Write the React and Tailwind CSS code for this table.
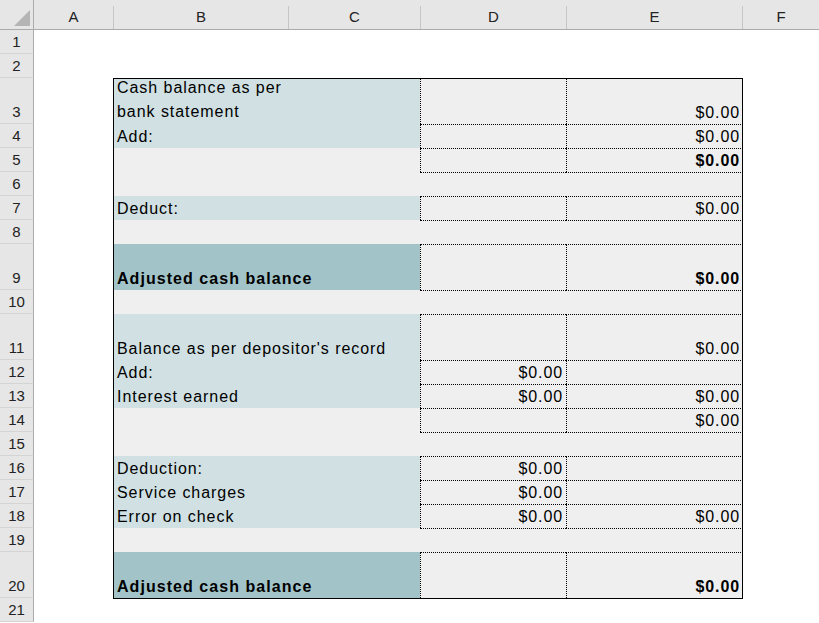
import React from "react";

const LB = "bg-[#d0e0e3]";
const TL = "bg-[#a2c4c9]";
const GR = "bg-[#efefef]";

const rows = [
  { n: 1, h: 24 },
  { n: 2, h: 24 },
  { n: 3, h: 46, t: true, bc: LB, label: ["Cash balance as per", "bank statement"], side: true, e: "$0.00" },
  { n: 4, h: 24, t: true, bc: LB, label: ["Add:"], side: true, e: "$0.00" },
  { n: 5, h: 24, t: true, bc: GR, side: true, e: "$0.00", eb: true },
  { n: 6, h: 24, t: true, bc: GR },
  { n: 7, h: 24, t: true, bc: LB, label: ["Deduct:"], side: true, e: "$0.00" },
  { n: 8, h: 24, t: true, bc: GR },
  { n: 9, h: 46, t: true, bc: TL, label: ["Adjusted cash balance"], bold: true, side: true, e: "$0.00", eb: true },
  { n: 10, h: 24, t: true, bc: GR },
  { n: 11, h: 46, t: true, bc: LB, label: ["Balance as per depositor's record"], side: true, e: "$0.00" },
  { n: 12, h: 24, t: true, bc: LB, label: ["Add:"], side: true, d: "$0.00" },
  { n: 13, h: 24, t: true, bc: LB, label: ["Interest earned"], side: true, d: "$0.00", e: "$0.00" },
  { n: 14, h: 24, t: true, bc: GR, side: true, e: "$0.00" },
  { n: 15, h: 24, t: true, bc: GR },
  { n: 16, h: 24, t: true, bc: LB, label: ["Deduction:"], side: true, d: "$0.00" },
  { n: 17, h: 24, t: true, bc: LB, label: ["Service charges"], side: true, d: "$0.00" },
  { n: 18, h: 24, t: true, bc: LB, label: ["Error on check"], side: true, d: "$0.00", e: "$0.00" },
  { n: 19, h: 24, t: true, bc: GR },
  { n: 20, h: 46, t: true, bc: TL, label: ["Adjusted cash balance"], bold: true, side: true, e: "$0.00", eb: true },
  { n: 21, h: 24, bottom: true },
];

const FONT = { fontFamily: '"Liberation Sans", Arial, sans-serif' };
const HFONT = { fontFamily: '"Liberation Sans", Arial, sans-serif' };

function HeaderCell({ w, label, last }) {
  return (
    <div className={`flex h-full items-stretch ${last ? "flex-1" : ""}`}>
      <div className={`flex items-center justify-center pt-[5px] text-[15px] text-[#222] ${w}`} style={HFONT}>
        {label}
      </div>
      {!last && <div className="w-px self-end h-[23px] bg-[#c6c6c6]" />}
    </div>
  );
}

function Row({ r }) {
  const first = r.n === 3;
  const dTop = r.t ? (first ? "border-t border-t-black" : "border-t [border-top-style:dotted] border-t-black") : "";
  const side = r.side ? "border-l [border-left-style:dotted] border-l-black" : "";
  const bottom = r.bottom ? "border-t border-t-black" : "";
  const wrapped = r.label && r.label.length > 1;
  return (
    <div className="flex" style={{ height: r.h }}>
      <div className="w-[34px] shrink-0 bg-[#e6e6e6] border-r border-r-[#ababab] border-b border-b-[#d4d4d4] flex items-end justify-center pb-[1px] text-[15px] text-[#222] leading-[20px]" style={HFONT}>
        {r.n}
      </div>
      <div className="w-[79px] shrink-0 bg-white" />
      {r.t ? (
        <>
          <div className={`w-[307px] shrink-0 border-l border-l-black ${first ? "border-t border-t-black" : ""} ${r.bc} flex flex-col justify-end pl-[3px] ${wrapped ? "pb-0 leading-[24px]" : "pb-[2px] leading-[18px]"} text-[16px] tracking-[0.95px] text-black ${r.bold ? "font-bold tracking-[1.05px]" : ""}`} style={FONT}>
            {r.label && r.label.map((l, i) => <div key={i} className="whitespace-nowrap">{l}</div>)}
          </div>
          <div className={`w-[146px] shrink-0 ${GR} ${dTop} ${side} flex items-end justify-end pr-[3px] pb-[2px] text-[16px] tracking-[0.9px] leading-[18px] text-black`} style={FONT}>
            {r.d}
          </div>
          <div className={`w-[177px] shrink-0 ${GR} ${dTop} ${side} border-r border-r-black flex items-end justify-end pr-[2px] pb-[2px] text-[16px] tracking-[0.9px] leading-[18px] text-black ${r.eb ? "font-bold" : ""}`} style={FONT}>
            {r.e}
          </div>
        </>
      ) : (
        <>
          <div className={`w-[307px] shrink-0 bg-white ${bottom}`} />
          <div className={`w-[146px] shrink-0 bg-white ${bottom}`} />
          <div className={`w-[177px] shrink-0 bg-white ${bottom}`} />
        </>
      )}
      <div className="flex-1 bg-white" />
    </div>
  );
}

export default function App() {
  return (
    <div className="w-[819px] h-[623px] overflow-hidden bg-white select-none">
      <div className="flex h-[30px] bg-[#e6e6e6] border-b border-b-[#ababab]">
        <div className="w-[34px] shrink-0 border-r border-r-[#ababab] flex items-end justify-end pb-[3px] pr-[3px]">
          <svg width="16" height="16" viewBox="0 0 16 16">
            <polygon points="0,16 16,0 16,16" fill="#b5b5b5" />
          </svg>
        </div>
        <HeaderCell w="w-[79px]" label="A" />
        <HeaderCell w="w-[174px]" label="B" />
        <HeaderCell w="w-[131px]" label="C" />
        <HeaderCell w="w-[145px]" label="D" />
        <HeaderCell w="w-[175px]" label="E" />
        <HeaderCell w="w-[76px]" label="F" last />
      </div>
      {rows.map((r) => (
        <Row key={r.n} r={r} />
      ))}
    </div>
  );
}
